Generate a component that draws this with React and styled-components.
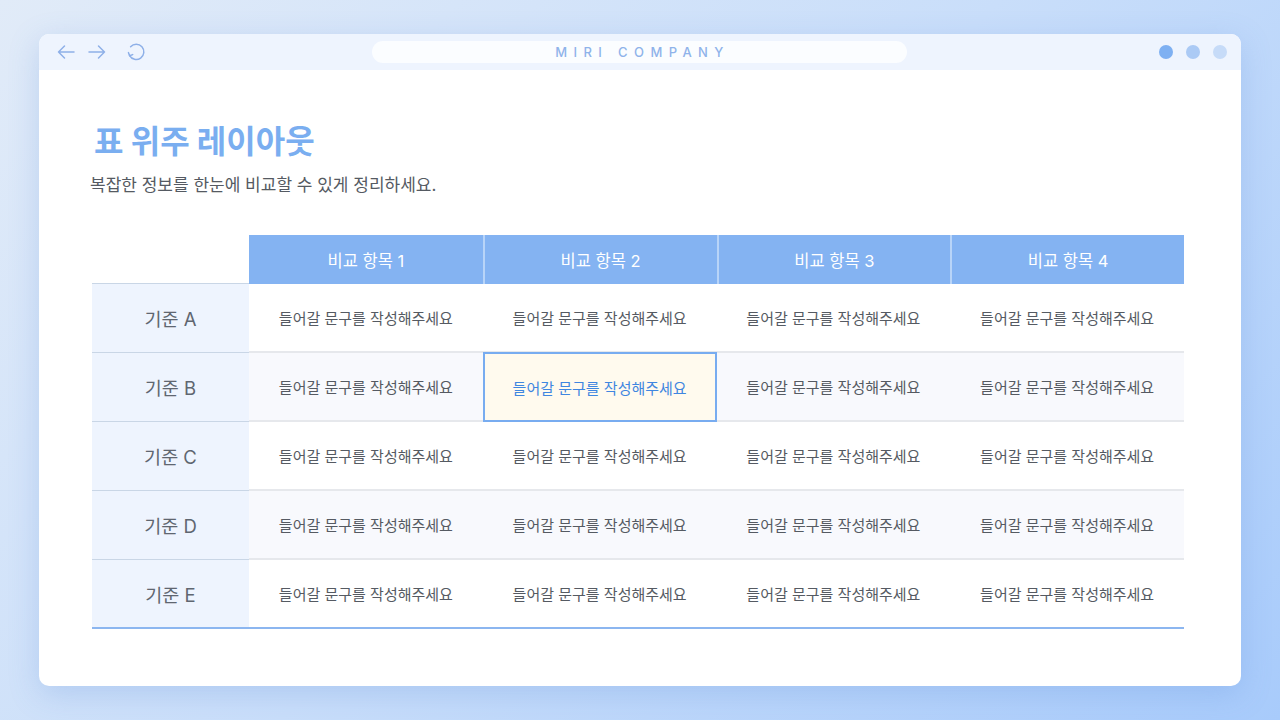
import React from "react";
import styled, { createGlobalStyle } from "styled-components";

const COLUMNS = ["비교 항목 1", "비교 항목 2", "비교 항목 3", "비교 항목 4"];
const ROWS = ["기준 A", "기준 B", "기준 C", "기준 D", "기준 E"];
const CELL_TEXT = "들어갈 문구를 작성해주세요";

const App = () => {
  return (
    <>
      <GlobalStyle />
      <Page>
        <Window>
          <TitleBar>
            <NavBox>
              <NavIcon width="20" height="20" viewBox="0 0 20 20">
                <path d="M18 10H2.5M8.5 4l-6 6 6 6" />
              </NavIcon>
              <NavIcon width="20" height="20" viewBox="0 0 20 20">
                <path d="M2 10h15.5M11.5 4l6 6-6 6" />
              </NavIcon>
              <NavIcon width="20" height="20" viewBox="0 0 20 20" style={{ marginLeft: 8 }}>
                <path d="M3.6 13.6A7.6 7.6 0 1 0 4.6 4.8" />
                <path d="M2.4 10.6l1.2 3.2 3.1-1.2" />
              </NavIcon>
            </NavBox>
            <AddressBar>MIRI COMPANY</AddressBar>
            <DotBox>
              <Dot color="#7eb0f2" />
              <Dot color="#abcaf5" />
              <Dot color="#c6dbf8" />
            </DotBox>
          </TitleBar>
          <Content>
            <Title>표 위주 레이아웃</Title>
            <Subtitle>복잡한 정보를 한눈에 비교할 수 있게 정리하세요.</Subtitle>
            <Table>
              <Corner />
              {COLUMNS.map((col, i) => (
                <HeadCell key={col} first={i === 0}>
                  {col}
                </HeadCell>
              ))}
              {ROWS.map((row, r) => (
                <React.Fragment key={row}>
                  <RowLabel last={r === ROWS.length - 1}>{row}</RowLabel>
                  {COLUMNS.map((col, c) => (
                    <Cell
                      key={col}
                      striped={r % 2 === 1}
                      last={r === ROWS.length - 1}
                      active={r === 1 && c === 1}
                    >
                      {CELL_TEXT}
                    </Cell>
                  ))}
                </React.Fragment>
              ))}
            </Table>
          </Content>
        </Window>
      </Page>
    </>
  );
};

const GlobalStyle = createGlobalStyle`
  html, body {
    margin: 0;
    padding: 0;
  }
  body {
    font-family: "Inter", "Noto Sans CJK KR", sans-serif;
  }
`;

const Page = styled.div`
  width: 1280px;
  height: 720px;
  box-sizing: border-box;
  padding: 34px 39px;
  background: linear-gradient(135deg, #e1ebf8 0%, #c9defa 50%, #a8cbfb 100%);
  overflow: hidden;
`;

const Window = styled.div`
  width: 1202px;
  height: 652px;
  background: #ffffff;
  border-radius: 10px;
  overflow: hidden;
  box-shadow: 0 8px 30px rgba(90, 140, 220, 0.25);
  display: flex;
  flex-direction: column;
`;

const TitleBar = styled.div`
  height: 36px;
  background: #eef4fe;
  display: flex;
  align-items: center;
  padding: 0 14px 0 17px;
`;

const NavBox = styled.div`
  display: flex;
  align-items: center;
  gap: 11px;
  width: 316px;
`;

const NavIcon = styled.svg`
  fill: none;
  stroke: #8eb0e8;
  stroke-width: 1.5;
  stroke-linecap: round;
  stroke-linejoin: round;
`;

const AddressBar = styled.div`
  width: 535px;
  height: 22px;
  border-radius: 11px;
  background: #fbfdff;
  color: #8fb3ea;
  font-family: "Inter", "Liberation Sans", sans-serif;
  font-size: 13px;
  font-weight: 500;
  letter-spacing: 6.4px;
  padding-left: 6px;
  box-sizing: border-box;
  display: flex;
  align-items: center;
  justify-content: center;
`;

const DotBox = styled.div`
  flex: 1;
  display: flex;
  justify-content: flex-end;
  gap: 13px;
`;

const Dot = styled.div`
  width: 14px;
  height: 14px;
  border-radius: 50%;
  background: ${(p) => p.color};
`;

const Content = styled.div`
  padding: 47px 57px 0 53px;
`;

const Title = styled.h1`
  margin: 0 0 0 2px;
  font-family: "Noto Sans CJK KR", sans-serif;
  font-size: 32px;
  font-weight: 700;
  line-height: 44px;
  color: #7aaef0;
`;

const Subtitle = styled.p`
  margin: 12px 0 0 -2px;
  font-family: "Inter", "Noto Sans CJK KR", sans-serif;
  font-size: 17px;
  line-height: 24px;
  color: #555a62;
`;

const Table = styled.div`
  margin-top: 38px;
  display: grid;
  grid-template-columns: 157px repeat(4, 1fr);
  grid-template-rows: 49px repeat(5, 69px);
  font-family: "Inter", "Noto Sans CJK KR", sans-serif;
`;

const Corner = styled.div`
  border-bottom: 1px solid #c9d6e6;
`;

const HeadCell = styled.div`
  background: #84b3f2;
  color: #ffffff;
  font-size: 16.5px;
  display: flex;
  align-items: center;
  justify-content: center;
  border-left: ${(p) => (p.first ? "none" : "2px solid #b8d4f8")};
`;

const RowLabel = styled.div`
  background: #eef4fe;
  color: #5f6670;
  font-size: 18.5px;
  display: flex;
  align-items: center;
  justify-content: center;
  border-bottom: ${(p) => (p.last ? "2px solid #8cb6f0" : "1px solid #c9d6e6")};
`;

const Cell = styled.div`
  background: ${(p) => (p.active ? "#fffaee" : p.striped ? "#f8f9fd" : "#ffffff")};
  color: ${(p) => (p.active ? "#3f86e0" : "#555a62")};
  font-size: 15px;
  display: flex;
  align-items: center;
  justify-content: center;
  box-sizing: border-box;
  border-bottom: ${(p) => (p.last ? "2px solid #8cb6f0" : "2px solid #e6e8ec")};
  ${(p) => p.active && "border: 2px solid #78acf0; margin-top: -1px;"}
`;

export default App;
